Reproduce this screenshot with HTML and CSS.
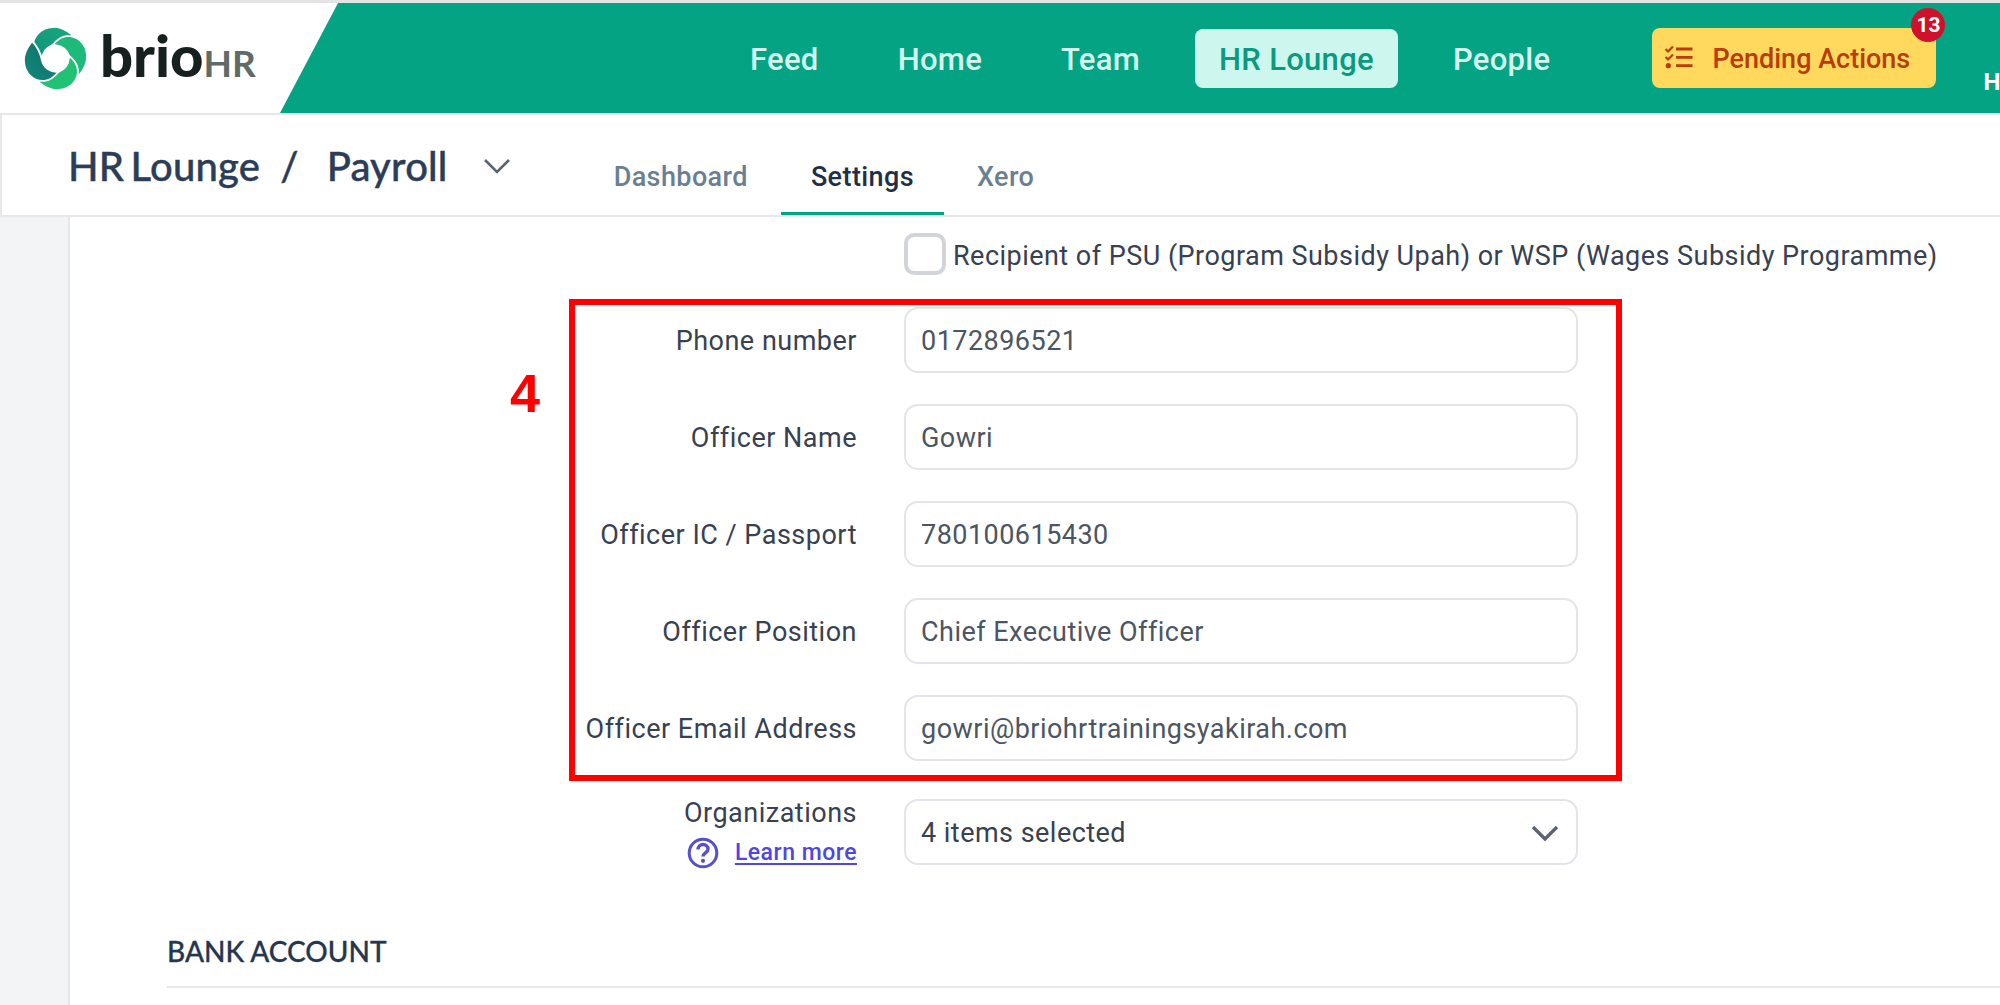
FILE: index.html
```html
<!DOCTYPE html>
<html lang="en">
<head>
<meta charset="utf-8">
<title>HR Lounge / Payroll</title>
<link rel="stylesheet" href="styles.css">
</head>
<body>
<div class="page">
  <header class="topbar">
    <a class="brand">
      <svg class="brand-mark" viewBox="-32 -32 64 64" aria-hidden="true">
        <defs>
          <linearGradient id="gl" x1="0" y1="0" x2="1" y2="1"><stop offset="0" stop-color="#12877a"/><stop offset="1" stop-color="#0d706c"/></linearGradient>
          <linearGradient id="gt" x1="0" y1="1" x2="1" y2="0"><stop offset="0" stop-color="#128f7c"/><stop offset="1" stop-color="#18ab7c"/></linearGradient>
        </defs>
        <g stroke="#fff" stroke-width="1.800" stroke-linejoin="round">
          <path fill="url(#gt)" d="M17,-23 C9,-29.500 2,-31.500 -3,-31 C-15,-30.500 -23,-21 -22,-11 C-21.500,-5 -18,-1 -13,3 C-14,-5 -9,-12 -1,-13.500 C6,-15 12,-18 17,-23 Z"/>
          <path fill="#1dbb79" transform="rotate(90)" d="M17,-23 C9,-29.500 2,-31.500 -3,-31 C-15,-30.500 -23,-21 -22,-11 C-21.500,-5 -18,-1 -13,3 C-14,-5 -9,-12 -1,-13.500 C6,-15 12,-18 17,-23 Z"/>
          <path fill="#22c274" transform="rotate(180)" d="M17,-23 C9,-29.500 2,-31.500 -3,-31 C-15,-30.500 -23,-21 -22,-11 C-21.500,-5 -18,-1 -13,3 C-14,-5 -9,-12 -1,-13.500 C6,-15 12,-18 17,-23 Z"/>
          <path fill="url(#gl)" transform="rotate(270)" d="M17,-23 C9,-29.500 2,-31.500 -3,-31 C-15,-30.500 -23,-21 -22,-11 C-21.500,-5 -18,-1 -13,3 C-14,-5 -9,-12 -1,-13.500 C6,-15 12,-18 17,-23 Z"/>
        </g>
      </svg>
      <span class="brand-word">brio</span><span class="brand-hr">HR</span>
    </a>
    <nav class="mainnav">
      <a class="mainnav-item">Feed</a>
      <a class="mainnav-item">Home</a>
      <a class="mainnav-item">Team</a>
      <a class="mainnav-item is-active">HR Lounge</a>
      <a class="mainnav-item">People</a>
    </nav>
    <button class="pending" type="button">
      <svg class="pending-icon" viewBox="0 0 28 24" aria-hidden="true">
        <path d="M0.500 3l2.500 2.500L8 0.500M0.500 11l2.500 2.500L8 8.500" fill="none" stroke="currentColor" stroke-width="2.200"/>
        <path d="M11 3h16.500M11 11.300h16.500M11 19.700h16.500" fill="none" stroke="currentColor" stroke-width="2.800"/>
        <circle cx="3.300" cy="19.700" r="2.600" fill="currentColor"/>
      </svg>
      <span class="pending-label">Pending Actions</span>
      <span class="pending-badge">13</span>
    </button>
    <span class="user-initial">H</span>
  </header>

  <section class="subbar">
    <h1 class="crumbs"><span>HR Lounge</span><span class="crumbs-sep">/</span><span>Payroll</span></h1>
    <svg class="crumbs-chevron" viewBox="0 0 28 16" aria-hidden="true"><path d="M2 2l12 12L26 2" fill="none" stroke="currentColor" stroke-width="2.600"/></svg>
    <div class="tabs">
      <a class="tab">Dashboard</a>
      <a class="tab is-active">Settings</a>
      <a class="tab">Xero</a>
    </div>
  </section>

  <main class="layout">
    <aside class="rail"></aside>
    <div class="content">
      <form class="form">
        <label class="check-row">
          <span class="checkbox"></span>
          <span class="check-text">Recipient of PSU (Program Subsidy Upah) or WSP (Wages Subsidy Programme)</span>
        </label>

        <label class="field-label">Phone number</label>
        <input class="field" type="text" value="0172896521" readonly>

        <label class="field-label">Officer Name</label>
        <input class="field" type="text" value="Gowri" readonly>

        <label class="field-label">Officer IC / Passport</label>
        <input class="field" type="text" value="780100615430" readonly>

        <label class="field-label">Officer Position</label>
        <input class="field" type="text" value="Chief Executive Officer" readonly>

        <label class="field-label">Officer Email Address</label>
        <input class="field" type="text" value="gowri@briohrtrainingsyakirah.com" readonly>

        <div class="org-label">
          <span class="org-name">Organizations</span>
          <span class="learn">
            <svg class="learn-icon" viewBox="0 0 32 32" aria-hidden="true">
              <circle cx="16" cy="16" r="13.800" fill="none" stroke="currentColor" stroke-width="3"/>
              <path d="M11 12.500c0-3 2.300-5 5-5s5 2 5 4.500c0 3.800-5 3.800-5 7.500" fill="none" stroke="currentColor" stroke-width="3.400"/>
              <circle cx="16" cy="23.800" r="2.100" fill="currentColor"/>
            </svg>
            <a class="learn-link">Learn more</a>
          </span>
        </div>
        <div class="field field-select">
          <span>4 items selected</span>
          <svg class="select-chevron" viewBox="0 0 28 16" aria-hidden="true"><path d="M2 2l12 12L26 2" fill="none" stroke="currentColor" stroke-width="3.400"/></svg>
        </div>
      </form>

      <h2 class="section-title">BANK ACCOUNT</h2>
    </div>
  </main>

  <div class="callout-box"></div>
  <div class="callout-number">4</div>
</div>
</body>
</html>
```

FILE: styles.css
```css
* { box-sizing: border-box; }

html, body { margin: 0; height: 100%; background: #fff; }

.page {
  position: relative;
  width: 2000px;
  height: 1005px;
  overflow: hidden;
  font-family: Roboto, "Liberation Sans", sans-serif;
  color: #374151;
  border-top: 3px solid #e4e4e4;
  display: flex;
  flex-direction: column;
}

/* top bar */
.topbar {
  height: 110px;
  flex: none;
  background: #03a384;
  display: flex;
  align-items: center;
  position: relative;
}

.brand {
  width: 338px;
  height: 100%;
  flex: none;
  background: #fff;
  clip-path: polygon(0 0, 100% 0, 280px 100%, 0 100%);
  display: flex;
  align-items: baseline;
  padding-left: 23px;
  font-family: Lato, sans-serif;
  line-height: 1;
}

.brand-mark {
  width: 65px;
  height: 65px;
  flex: none;
  align-self: flex-start;
  margin-top: 23px;
  margin-right: 12px;
}

.brand-word {
  font-size: 58px;
  font-weight: 900;
  color: #16201f;
  letter-spacing: 0;
  position: relative;
  top: 23px;
}

.brand-hr {
  font-size: 37px;
  font-weight: 700;
  color: #5f6b68;
  margin-left: 0;
  position: relative;
  top: 23px;
}

.mainnav {
  display: flex;
  flex: none;
  align-items: center;
  gap: 31px;
  margin-left: 388px;
  white-space: nowrap;
}

.mainnav-item {
  height: 59px;
  margin-top: 1px;
  display: flex;
  align-items: center;
  padding: 1px 24px 0;
  border-radius: 8px;
  font-size: 31px;
  font-weight: 500;
  color: #d5f5ec;
  letter-spacing: 0.3px;
}

.mainnav-item.is-active {
  background: #cdf7ee;
  color: #0b9a7e;
}

.pending {
  position: relative;
  margin-left: 78px;
  width: 284px;
  height: 60px;
  flex: none;
  border: 0;
  border-radius: 8px;
  background: #ffd95e;
  color: #b93c04;
  display: flex;
  align-items: center;
  padding: 0 0 0 13px;
  font-family: inherit;
  font-size: 27px;
  font-weight: 500;
  letter-spacing: 0;
  white-space: nowrap;
}

.pending-icon { width: 28px; height: 24px; margin-right: 19px; flex: none; }
.pending-label { padding-top: 2px; }

.pending-badge {
  position: absolute;
  top: -20px;
  right: -9px;
  width: 34px;
  height: 34px;
  border-radius: 50%;
  background: #d0112b;
  color: #fff;
  font-size: 21px;
  font-weight: 700;
  display: flex;
  align-items: center;
  justify-content: center;
}

.user-initial {
  align-self: flex-end;
  flex: none;
  margin-left: 47px;
  margin-bottom: 19px;
  color: #fff;
  font-size: 24px;
  font-weight: 700;
  line-height: 24px;
}

/* breadcrumb + tabs */
.subbar {
  height: 104px;
  flex: none;
  border: 2px solid #e5e7eb;
  border-right: 0;
  display: flex;
  align-items: flex-start;
  padding-left: 66px;
}

.crumbs {
  margin: 26px 0 0;
  display: flex;
  font-family: Lato, sans-serif;
  font-size: 40px;
  font-weight: 500;
  line-height: 50px;
  letter-spacing: 0.2px;
  word-spacing: -4px;
  color: #2b3d57;
  -webkit-text-stroke: 0.4px #2b3d57;
}

.crumbs-sep { margin: 0 28px 0 20px; }

.crumbs-chevron {
  width: 28px;
  height: 16px;
  margin: 43px 0 0 35px;
  color: #5b6472;
  flex: none;
}

.tabs {
  display: flex;
  gap: 3px;
  margin-left: 73px;
  height: 100px;
  align-items: stretch;
  padding-top: 26px;
}

.tab {
  padding: 0 30px;
  display: flex;
  align-items: center;
  font-size: 27px;
  font-weight: 500;
  color: #6b7f93;
  border-bottom: 3px solid transparent;
  letter-spacing: 0.4px;
}

.tab.is-active {
  color: #1f2f46;
  border-bottom-color: #03a384;
}

/* main */
.layout { flex: 1; display: flex; min-height: 0; }

.rail {
  width: 70px;
  flex: none;
  background: #f3f4f6;
  border-right: 2px solid #e5e7eb;
}

.content { flex: 1; min-width: 0; }

.form {
  display: grid;
  grid-template-columns: 786px 674px;
  column-gap: 48px;
  row-gap: 31px;
  align-items: center;
  padding-top: 16px;
  font-size: 27px;
  letter-spacing: 0.5px;
}

.check-row {
  grid-column: 2;
  display: flex;
  align-items: center;
  gap: 7px;
  height: 42px;
  margin-bottom: 1px;
  white-space: nowrap;
}

.check-text { padding-top: 4px; letter-spacing: 0.47px; }

.checkbox {
  width: 42px;
  height: 42px;
  flex: none;
  border: 4px solid #d1d5db;
  border-radius: 10px;
}

.field-label {
  text-align: right;
  padding-top: 2px;
  margin-right: -1px;
}

.field {
  display: block;
  width: 674px;
  height: 66px;
  padding: 2px 15px 0;
  border: 2px solid #e2e5ea;
  border-radius: 14px;
  background: #fff;
  font-family: inherit;
  font-size: 27px;
  letter-spacing: 0.47px;
  color: #4b5563;
  outline: none;
}

.org-label {
  margin-top: 7px;
  margin-right: -1px;
  height: 66px;
  display: flex;
  flex-direction: column;
  align-items: flex-end;
  justify-content: center;
  gap: 8px;
  line-height: 32px;
}

.org-name { padding-top: 2px; }

.learn { display: flex; align-items: center; gap: 16px; }
.learn-icon { width: 32px; height: 32px; color: #5451c9; }
.learn-link {
  color: #4f46e5;
  font-size: 23px;
  font-weight: 500;
  letter-spacing: 0.5px;
  text-decoration: underline;
  text-decoration-thickness: 2px;
  text-underline-offset: 3px;
}

.field-select {
  margin-top: 7px;
  display: flex;
  align-items: center;
  justify-content: space-between;
  color: #374151;
  padding-right: 17px;
}

.select-chevron { width: 28px; height: 16px; color: #5b6472; }

.section-title {
  margin: 69px 0 0 97px;
  height: 54px;
  font-family: Lato, sans-serif;
  font-size: 28px;
  font-weight: 500;
  line-height: 34px;
  color: #25364f;
  -webkit-text-stroke: 0.3px #25364f;
  border-bottom: 2px solid #e5e7eb;
}

/* annotations over the screenshot */
.callout-box {
  position: absolute;
  left: 569px;
  top: 296px;
  width: 1053px;
  height: 482px;
  border: 6px solid #ff0000;
}

.callout-number {
  position: absolute;
  left: 510px;
  top: 360px;
  font-family: "Liberation Sans", Arial, sans-serif;
  font-size: 54px;
  font-weight: 700;
  line-height: 60px;
  color: #ff0000;
}
```
